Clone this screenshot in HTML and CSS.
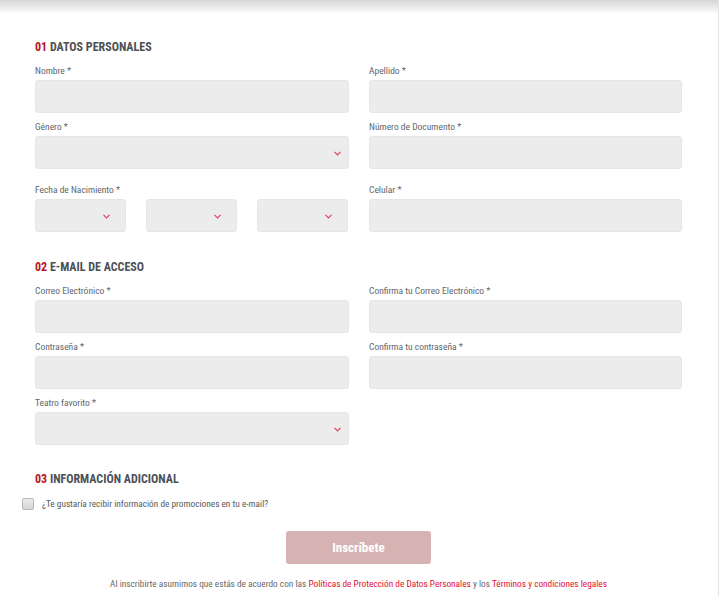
FILE: index.html
```html
<!DOCTYPE html>
<html lang="es">
<head>
<meta charset="utf-8">
<title>Registro</title>
<link rel="stylesheet" href="styles.css">
</head>
<body>
<div class="page">
  <div class="shade"></div>
  <form class="form">
    <section class="section">
      <h2 class="sec-title"><span class="num">01</span> DATOS PERSONALES</h2>
      <div class="grid">
        <div class="field">
          <label class="label">Nombre *</label>
          <div class="input"></div>
        </div>
        <div class="field">
          <label class="label">Apellido *</label>
          <div class="input"></div>
        </div>
        <div class="field">
          <label class="label">Género *</label>
          <div class="input select">
            <svg class="chev" width="7" height="5" viewBox="0 0 7 5"><polyline points="0.5,0.8 3.5,3.8 6.5,0.8" fill="none" stroke="#e2405c" stroke-width="1.2"/></svg>
          </div>
        </div>
        <div class="field">
          <label class="label">Número de Documento *</label>
          <div class="input"></div>
        </div>
        <div class="field spaced">
          <label class="label">Fecha de Nacimiento *</label>
          <div class="dates">
            <div class="input select small">
              <svg class="chev" width="7" height="5" viewBox="0 0 7 5"><polyline points="0.5,0.8 3.5,3.8 6.5,0.8" fill="none" stroke="#e2405c" stroke-width="1.2"/></svg>
            </div>
            <div class="input select small">
              <svg class="chev" width="7" height="5" viewBox="0 0 7 5"><polyline points="0.5,0.8 3.5,3.8 6.5,0.8" fill="none" stroke="#e2405c" stroke-width="1.2"/></svg>
            </div>
            <div class="input select small">
              <svg class="chev" width="7" height="5" viewBox="0 0 7 5"><polyline points="0.5,0.8 3.5,3.8 6.5,0.8" fill="none" stroke="#e2405c" stroke-width="1.2"/></svg>
            </div>
          </div>
        </div>
        <div class="field spaced">
          <label class="label">Celular *</label>
          <div class="input"></div>
        </div>
      </div>
    </section>

    <section class="section">
      <h2 class="sec-title"><span class="num">02</span> E-MAIL DE ACCESO</h2>
      <div class="grid">
        <div class="field">
          <label class="label">Correo Electrónico *</label>
          <div class="input"></div>
        </div>
        <div class="field">
          <label class="label">Confirma tu Correo Electrónico *</label>
          <div class="input"></div>
        </div>
        <div class="field">
          <label class="label">Contraseña *</label>
          <div class="input"></div>
        </div>
        <div class="field">
          <label class="label">Confirma tu contraseña *</label>
          <div class="input"></div>
        </div>
        <div class="field">
          <label class="label">Teatro favorito *</label>
          <div class="input select">
            <svg class="chev" width="7" height="5" viewBox="0 0 7 5"><polyline points="0.5,0.8 3.5,3.8 6.5,0.8" fill="none" stroke="#e2405c" stroke-width="1.2"/></svg>
          </div>
        </div>
      </div>
    </section>

    <section class="section last">
      <h2 class="sec-title"><span class="num">03</span> INFORMACIÓN ADICIONAL</h2>
      <div class="check-row">
        <span class="checkbox"></span>
        <span class="check-text">¿Te gustaría recibir información de promociones en tu e-mail?</span>
      </div>
    </section>

    <div class="actions">
      <button type="button" class="btn">Inscríbete</button>
    </div>
    <p class="legal">Al inscribirte asumimos que estás de acuerdo con las <a class="link">Políticas de Protección de Datos Personales</a> y los <a class="link">Términos y condiciones legales</a></p>
  </form>
</div>
</body>
</html>
```

FILE: styles.css
```css
* { box-sizing: border-box; }

html, body {
  margin: 0;
  padding: 0;
  background: #ffffff;
}

body {
  font-family: "Roboto Condensed", "Liberation Sans Narrow", "DejaVu Sans Condensed", Roboto, sans-serif;
  color: #5d6166;
}

.page {
  width: 719px;
  height: 596px;
  border-right: 1px solid #e2e2e2;
  overflow: hidden;
}

.shade {
  height: 14px;
  background: linear-gradient(#d5d5d5, rgba(255, 255, 255, 0));
}

.form {
  margin: 0 0 0 35px;
  width: 647px;
  padding-top: 25px;
}

.section + .section {
  margin-top: 27px;
}

.section.last {
  margin-top: 26px;
}

.sec-title {
  margin: 0 0 9px;
  font-size: 12px;
  line-height: 16px;
  font-weight: 700;
  color: #4c5056;
}

.num {
  color: #b8141f;
}

.grid {
  display: grid;
  grid-template-columns: 314px 313px;
  column-gap: 20px;
  row-gap: 7px;
}

.field.spaced {
  margin-top: 7px;
}

.label {
  display: block;
  font-size: 9.5px;
  line-height: 13px;
  margin-bottom: 3px;
  color: #62666b;
}

.input {
  position: relative;
  height: 33px;
  background: #ececec;
  border: 1px solid #e6e6e6;
  border-radius: 3px;
}

.dates {
  display: flex;
  gap: 20px;
}

.input.small {
  flex: 0 0 91px;
}

.chev {
  position: absolute;
  right: 7px;
  top: 14px;
  display: block;
}

.small .chev {
  right: 15px;
}

.check-row {
  display: flex;
  align-items: center;
  gap: 8px;
  margin: 10px 0 0 -13px;
  height: 13px;
}

.checkbox {
  width: 12px;
  height: 12px;
  border: 1px solid #b9b9b9;
  border-radius: 2px;
  background: linear-gradient(#ececec, #d4d4d4);
}

.check-text {
  font-size: 9.3px;
  line-height: 13px;
  color: #55595e;
}

.actions {
  display: flex;
  justify-content: center;
  margin-top: 21px;
}

.btn {
  width: 145px;
  height: 33px;
  border: 0;
  border-radius: 3px;
  background: #d6b3b3;
  color: #ffffff;
  font-family: inherit;
  font-size: 13px;
  font-weight: 700;
}

.legal {
  margin: 14px 0 0;
  text-align: center;
  font-size: 9.3px;
  line-height: 12px;
  color: #6a6a6a;
}

.link {
  color: #e3102f;
  text-decoration: none;
}
```
